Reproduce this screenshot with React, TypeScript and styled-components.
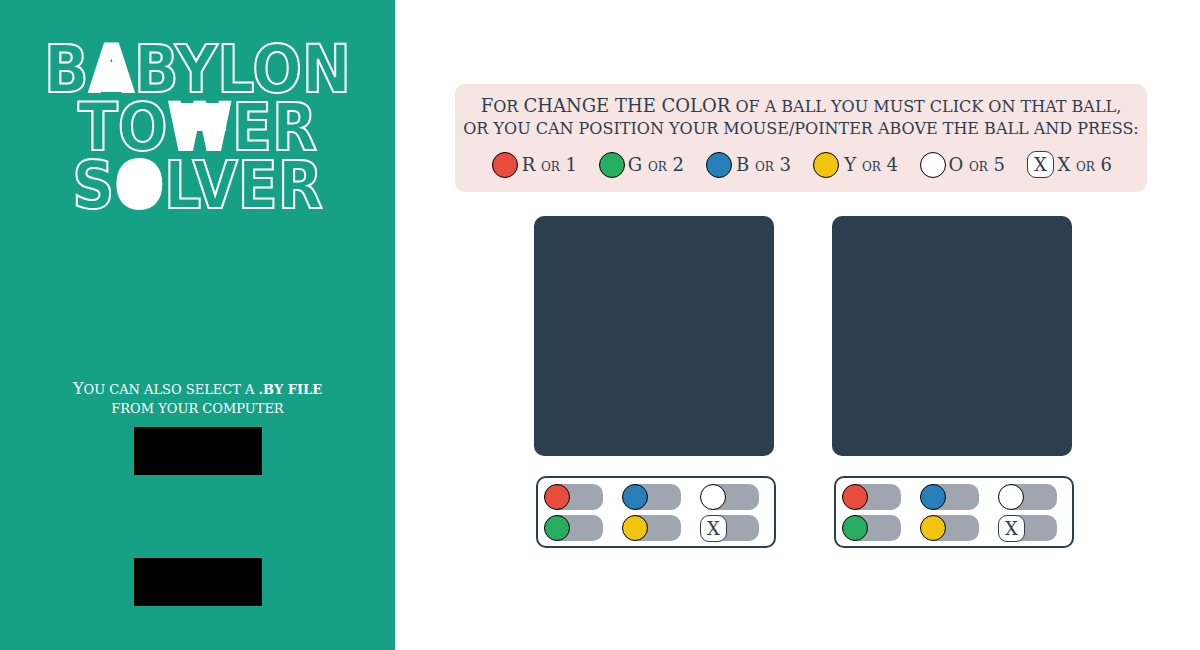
import React from "react";
import styled, { createGlobalStyle, css } from "styled-components";

const navy = "#2c3e50";
const teal = "#16a085";

const GlobalStyle = createGlobalStyle`
  *, *::before, *::after { box-sizing: border-box; }
  body { margin: 0; background: #fff; color: ${navy}; font-family: "DejaVu Serif", serif; }
  h1, p, ul { margin: 0; padding: 0; }
  ul { list-style: none; }
`;

const Page = styled.div`
  display: flex;
  min-height: 100vh;
`;

const Sidebar = styled.aside`
  flex: 0 0 395px;
  display: flex;
  flex-direction: column;
  align-items: center;
  padding: 41px 20px 44px;
  background: ${teal};
  color: #fff;
`;

const Title = styled.h1`
  font: bold 65px/58px "DejaVu Sans Condensed", "DejaVu Sans", sans-serif;
  text-align: center;
  color: ${teal};
  -webkit-text-stroke: 2px #fff;
`;

const TitleLine = styled.span`
  display: block;
  white-space: nowrap;
`;

/* White fills behind the gaps and counters of the solid letters */
const fills = {
  a: "linear-gradient(#fff, #fff) 50% 17px / 22px 30px",
  w: "linear-gradient(#fff, #fff) 50% 0 / 52px 28px",
  o: "radial-gradient(closest-side, #fff 97%, transparent) 50% 50% / 34px 42px",
};

const Solid = styled.span<{ $fill: keyof typeof fills }>`
  display: inline-block;
  height: 58px;
  padding: 4px 0 5px;
  line-height: 49px;
  vertical-align: top;
  color: #fff;
  background: ${(p) => fills[p.$fill]} no-repeat content-box;
`;

const FileHint = styled.p`
  margin-top: 164px;
  font-size: 13px;
  line-height: 19px;
  text-align: center;
  text-transform: uppercase;
`;

const Initial = styled.span`
  font-size: 16px;
`;

const BlackButton = styled.button<{ $last?: boolean }>`
  width: 128px;
  height: 48px;
  padding: 0;
  border: 0;
  background: #000;
  cursor: pointer;
  margin-top: ${(p) => (p.$last ? "83px" : "9px")};
`;

const Main = styled.main`
  flex: 1;
  min-width: 0;
  padding: 84px 53px 40px 60px;
`;

const Help = styled.section`
  padding: 10px 0 14px;
  border-radius: 10px;
  background: #f6e5e3;
  text-align: center;
`;

const HelpText = styled.p`
  height: 23px;
  font-size: 16px;
  line-height: 23px;
  text-transform: uppercase;
  white-space: nowrap;
`;

const Caps = styled.span`
  font-size: 18px;
`;

const Legend = styled.ul`
  display: flex;
  justify-content: center;
  gap: 22px;
  margin-top: 11px;
  padding-left: 2px;
`;

const LegendItem = styled.li`
  display: flex;
  align-items: center;
  justify-content: space-between;
  width: 85px;
  height: 27px;
  font-size: 18px;
  line-height: 27px;
  white-space: nowrap;
`;

const LegendText = styled.span`
  padding-top: 2px;
`;

const Or = styled.span`
  font-size: 12px;
`;

const swatch = css`
  position: relative;
  flex: none;
  display: block;
`;

const Ball = styled.span<{ $color: string }>`
  ${swatch}
  width: 26px;
  height: 26px;
  border: 1px solid #000;
  border-radius: 50%;
  background: ${(p) => p.$color};
`;

const Cross = styled.span`
  ${swatch}
  width: 27px;
  height: 27px;
  border: 1px solid ${navy};
  border-radius: 9px;
  background: #fff;
  font-size: 18px;
  line-height: 25px;
  text-align: center;
`;

const Towers = styled.div`
  display: flex;
  justify-content: center;
  gap: 58px;
  margin-top: 24px;
  padding-left: 4px;
`;

const Tower = styled.section`
  width: 240px;
`;

const Board = styled.div`
  height: 240px;
  border-radius: 10px;
  background: ${navy};
`;

const Counters = styled.ul`
  display: grid;
  grid-template-columns: repeat(3, 59px);
  gap: 5px 19px;
  width: 240px;
  height: 72px;
  margin: 20px 0 0 2px;
  padding: 6px;
  border: 2px solid ${navy};
  border-radius: 10px;
`;

const Counter = styled.li`
  display: flex;
  align-items: center;
  height: 26px;

  &::after {
    content: "";
    flex: 1;
    height: 26px;
    margin-left: -13px;
    border-radius: 0 10px 10px 0;
    background: #9fa6b0;
  }
`;

const swatches = [
  { letter: "R", color: "#e74c3c" },
  { letter: "G", color: "#27ae60" },
  { letter: "B", color: "#2980b9" },
  { letter: "Y", color: "#f1c40f" },
  { letter: "O", color: "#fff" },
  { letter: "X", color: "" },
];

const counterOrder = [0, 2, 4, 1, 3, 5];

function Swatch({ color }: { color: string }) {
  return color ? <Ball $color={color} /> : <Cross>X</Cross>;
}

function TowerPanel({ label }: { label: string }) {
  return (
    <Tower aria-label={label}>
      <Board />
      <Counters>
        {counterOrder.map((i) => (
          <Counter key={i}>
            <Swatch color={swatches[i].color} />
          </Counter>
        ))}
      </Counters>
    </Tower>
  );
}

export default function App() {
  return (
    <Page>
      <GlobalStyle />
      <Sidebar>
        <Title>
          <TitleLine>B<Solid $fill="a">A</Solid>BYLON</TitleLine>
          <TitleLine>TO<Solid $fill="w">W</Solid>ER</TitleLine>
          <TitleLine>S<Solid $fill="o">O</Solid>LVER</TitleLine>
        </Title>
        <FileHint>
          <Initial>Y</Initial>ou can also select a <b>.by file</b>
          <br />
          from your computer
        </FileHint>
        <BlackButton type="button" aria-label="Select file" />
        <BlackButton type="button" aria-label="Solve" $last />
      </Sidebar>
      <Main>
        <Help>
          <HelpText>
            <Caps>F</Caps>or <Caps>change the color</Caps> of a ball you must click on that ball,
          </HelpText>
          <HelpText>or you can position your mouse/pointer above the ball and press:</HelpText>
          <Legend>
            {swatches.map(({ letter, color }, i) => (
              <LegendItem key={letter}>
                <Swatch color={color} />
                <LegendText>
                  {letter} <Or>OR</Or> {i + 1}
                </LegendText>
              </LegendItem>
            ))}
          </Legend>
        </Help>
        <Towers>
          <TowerPanel label="Start position" />
          <TowerPanel label="Target position" />
        </Towers>
      </Main>
    </Page>
  );
}
